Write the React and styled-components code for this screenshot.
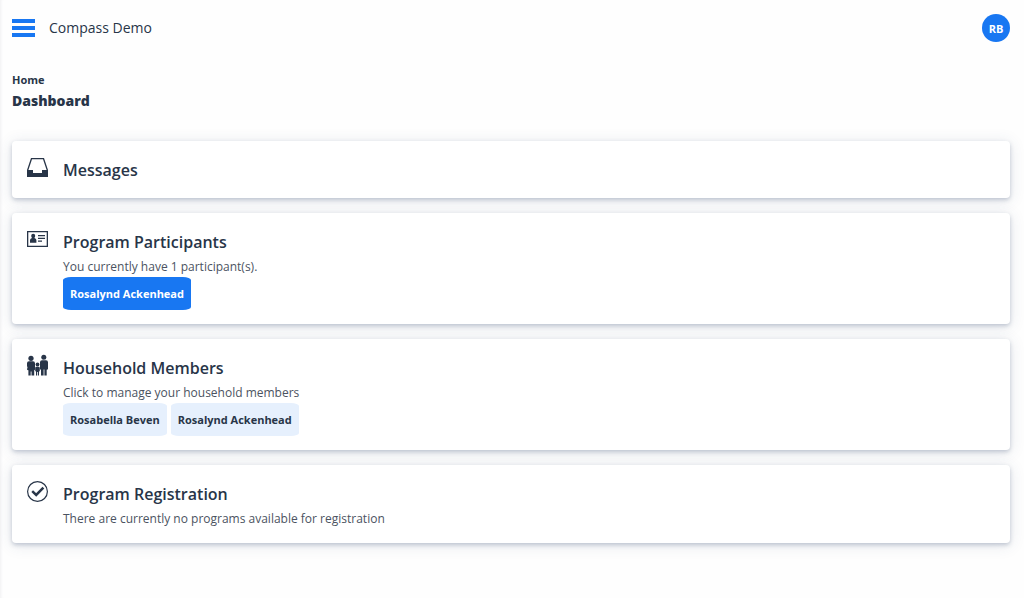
import React from 'react';
import styled, { createGlobalStyle } from 'styled-components';

const blue = '#1877f2';
const dark = '#283548';
const fontFamily = "'Segoe UI', 'Open Sans', 'Noto Sans', sans-serif";

const GlobalStyle = createGlobalStyle`
  * {
    box-sizing: border-box;
  }
  body {
    margin: 0;
    background: #fefefe;
    color: ${dark};
    font-family: ${fontFamily};
  }
`;
const Page = styled.div`
  min-height: 100vh;
  padding: 0 14px 14px 12px;
  box-shadow: inset 3px 0 3px -2px #f0f0f2;
`;
const Header = styled.header`
  display: flex;
  align-items: center;
  height: 56px;
`;
const MenuButton = styled.button`
  display: flex;
  flex-direction: column;
  justify-content: space-between;
  width: 23px;
  height: 18px;
  padding: 0;
  border: 0;
  background: none;
  cursor: pointer;
`;
const MenuBar = styled.span`
  height: 4px;
  background: ${blue};
`;
const Brand = styled.div`
  flex: 1;
  padding-left: 14px;
  font-size: 14px;
  font-weight: 500;
  line-height: 20px;
`;
const Avatar = styled.button`
  width: 28px;
  height: 28px;
  padding: 0;
  border: 0;
  border-radius: 50%;
  background: ${blue};
  color: #fff;
  font-family: inherit;
  font-size: 11px;
  font-weight: 700;
  cursor: pointer;
`;
const Heading = styled.div`
  padding: 15px 0 28px;
`;
const Breadcrumb = styled.a`
  display: block;
  color: ${dark};
  font-size: 11px;
  font-weight: 700;
  line-height: 18px;
  text-decoration: none;
`;
const PageTitle = styled.h1`
  margin: 0;
  font-size: 14px;
  font-weight: 800;
  line-height: 24px;
`;
const Cards = styled.main`
  display: flex;
  flex-direction: column;
  gap: 15px;
`;
const Card = styled.section`
  display: flex;
  align-items: flex-start;
  gap: 15px;
  padding: 15px 15px 14px;
  border-radius: 4px;
  background: #fff;
  box-shadow: 0 2px 4px rgba(50, 70, 110, 0.26), 0 2px 16px rgba(50, 70, 110, 0.13);
`;
const Icon = styled.svg`
  flex: none;
  width: 21px;
  height: 24px;
  fill: ${dark};
`;
const Content = styled.div`
  min-width: 0;
  padding-top: 1px;
`;
const CardTitle = styled.h2`
  margin: 0;
  font-size: 16px;
  font-weight: 600;
  line-height: 27px;
`;
const Text = styled.p`
  margin: 0;
  color: #4b5361;
  font-size: 12px;
  line-height: 21px;
`;
const People = styled.div`
  display: flex;
  flex-wrap: wrap;
  gap: 4px;
`;
const Person = styled.button`
  height: 33px;
  padding: 0 7px;
  border: 0;
  border-radius: 8px / 3px;
  background: ${(props) => (props.$primary ? blue : '#e6f0fd')};
  color: ${(props) => (props.$primary ? '#fff' : dark)};
  font-family: inherit;
  font-size: 11px;
  font-weight: 700;
  cursor: pointer;
`;

const InboxIcon = () => (
  <Icon viewBox="0 0 21 24" aria-hidden="true">
    <path fillRule="evenodd" d="M4 2h13l4 12v7H0v-7L4 2zm1 1.200L1.400 14H6v3h9v-3h4.600L16 3.200H5z" />
  </Icon>
);
const CardIcon = () => (
  <Icon viewBox="0 0 21 24" aria-hidden="true">
    <path fillRule="evenodd" d="M0 3h21v16H0V3zm1.300 1.300v13.400h18.400V4.300H1.300z" />
    <path d="M4.200 7.700a2 2 0 0 1 4 0c0 1-.4 1.700-.8 2.200 1.400.5 2 1.200 2 2.600v2.200H3v-2.200c0-1.400.6-2.100 2-2.600-.4-.5-.8-1.200-.8-2.200zM11 7h7v1.300h-7zM11 9.700h7V11h-7zM11 12.500h4v1.300h-4z" />
  </Icon>
);
const FamilyIcon = () => (
  <Icon viewBox="0 0 21 24" aria-hidden="true">
    <circle cx="4" cy="4.300" r="2.600" />
    <circle cx="16.800" cy="3.200" r="2.500" />
    <circle cx="10.500" cy="10.500" r="1.900" />
    <path d="M2 7.200h4q2 0 2 2v6q0 1-.8 1v5.300H4.500v-4h-.8v4H1.400v-5.300q-1.400 0-1.400-1l.5-1.600L0 12V9.200q0-2 2-2zM15 6.300h4q2 0 2 2v6.500q0 1-1.300 1v5.700h-2.300v-6h-.8v6H14v-5.700q-1 0-1-1V8.300q0-2 2-2zM9.500 12.800h2q1.300 0 1.300 1.300v2.600q0 .8-.8.8v4h-1.100v-3.400h-.8v3.400H9v-4q-.8 0-.8-.8v-2.600q0-1.300 1.300-1.300z" />
  </Icon>
);
const CheckIcon = () => (
  <Icon viewBox="0 0 21 24" aria-hidden="true">
    <circle cx="10.500" cy="11.500" r="9.900" fill="none" stroke={dark} strokeWidth="1.200" />
    <path d="M5.200 11.200l4 3.700 7.200-7.200" fill="none" stroke={dark} strokeWidth="2.500" />
  </Icon>
);

const cards = [
  { title: 'Messages', icon: InboxIcon },
  {
    title: 'Program Participants',
    icon: CardIcon,
    text: 'You currently have 1 participant(s).',
    people: ['Rosalynd Ackenhead'],
    primary: true,
  },
  {
    title: 'Household Members',
    icon: FamilyIcon,
    text: 'Click to manage your household members',
    people: ['Rosabella Beven', 'Rosalynd Ackenhead'],
  },
  {
    title: 'Program Registration',
    icon: CheckIcon,
    text: 'There are currently no programs available for registration',
  },
];

export default function App() {
  return (
    <Page>
      <GlobalStyle />
      <Header>
        <MenuButton type="button" aria-label="Menu">
          <MenuBar />
          <MenuBar />
          <MenuBar />
        </MenuButton>
        <Brand>Compass Demo</Brand>
        <Avatar type="button">RB</Avatar>
      </Header>
      <Heading>
        <Breadcrumb href="#home">Home</Breadcrumb>
        <PageTitle>Dashboard</PageTitle>
      </Heading>
      <Cards>
        {cards.map(({ title, icon: CardGlyph, text, people, primary }) => (
          <Card key={title}>
            <CardGlyph />
            <Content>
              <CardTitle>{title}</CardTitle>
              {text && <Text>{text}</Text>}
              {people && (
                <People>
                  {people.map((name) => (
                    <Person key={name} type="button" $primary={primary}>
                      {name}
                    </Person>
                  ))}
                </People>
              )}
            </Content>
          </Card>
        ))}
      </Cards>
    </Page>
  );
}
